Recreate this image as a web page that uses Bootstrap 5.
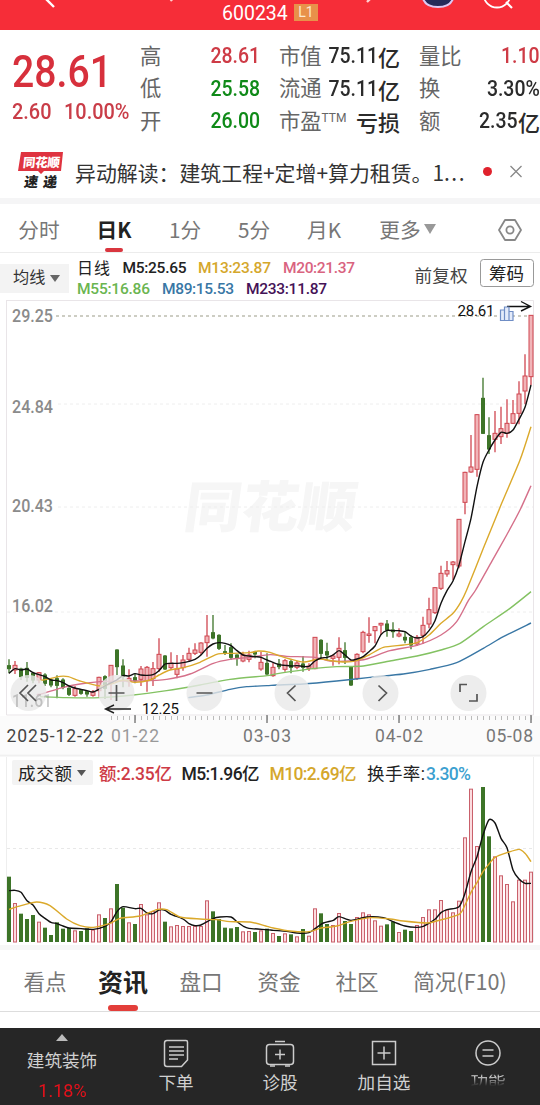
<!DOCTYPE html>
<html lang="zh-CN">
<head>
<meta charset="utf-8">
<meta name="viewport" content="width=device-width, initial-scale=1">
<title>600234</title>
<link href="https://cdn.jsdelivr.net/npm/bootstrap@5.3.0/dist/css/bootstrap.min.css" rel="stylesheet">
<style>
body{font-family:Roboto,"Noto Sans CJK SC",sans-serif;background:#fff;color:#333;width:540px;height:1105px;overflow:hidden;line-height:1}
svg{display:block;flex:none}
.cjk{font-family:"Noto Sans CJK SC",sans-serif}
.topbar{height:30px;background:#f62d38;color:#fff;position:relative}
.topbar .code{font-size:19.5px;line-height:27px;position:absolute;left:222px;top:0}
.lv{position:absolute;left:294px;top:4px;width:24px;height:17px;background:#e8914a;font-size:14px;line-height:17px;text-align:center;color:#fde8d0}
.quote{height:114px;display:grid;grid-template-columns:140px 120px 19px 121px 19px 121px;padding-top:10px}
.quote .line{height:32.6px;display:flex;justify-content:space-between;align-items:center;font-size:21.3px;white-space:nowrap;color:#666}
.quote .val{font-size:22px;font-weight:500;display:flex;align-items:center}
.quote .dig{transform:scaleX(.885);transform-origin:right}
.bigp{font-size:43.5px;font-weight:500;line-height:44px;padding:11px 0 0 12px;color:#d7303c}
.squeeze{display:inline-block;transform:scaleX(.9);transform-origin:left}
.chg{font-size:22.5px;line-height:23px;padding:5px 0 0 12px;color:#c93d48;display:flex;font-weight:500}
.chg .squeeze{width:52px;transform:scaleX(.885)}
.red{color:#ce3b46!important}.grn{color:#0f8a18!important}.dk{color:#2b2b2b!important}
.news{height:54px;padding-left:18px;font-size:20.9px;color:#333}
.sep{height:6px;background:#f5f5f6}
.tabs{height:49px;display:grid;grid-template-columns:78px 72px 70px 68px 72px 95px 85px;font-size:20.7px;color:#777;border-bottom:1px solid #ececec}
.tabs>div{display:flex;align-items:center;justify-content:center;position:relative;height:51px}
.tabs .on,.lower .on{color:#222;font-weight:700}
.bar{position:absolute;background:#d9363f;border-radius:3px}
.legendrow{height:47px;display:flex}
.pill{background:#f3f3f3;color:#333;display:flex;align-items:center;gap:5px}
.legendrow .pill{height:29px;width:69px;margin-top:11px;padding-left:13px;font-size:16.2px}
.lower{height:62px;border-bottom:1px solid #ddd;display:grid;grid-template-columns:78px 78px 78px 78px 78px 128px 16px;font-size:21.6px;color:#777;padding-left:6px}
.lower>div{display:flex;align-items:center;justify-content:center;position:relative;white-space:nowrap;height:62px}
.foot{height:77px;margin-top:16px;background:#262626;color:#d0d0d0;display:grid;grid-template-columns:124px 104px 104px 104px 104px;font-size:17.6px}
.foot>div{display:flex;flex-direction:column;align-items:center}
.foot svg{margin-top:11px}
.foot span{line-height:20px;margin-top:4px}
.foot .fade-label{margin-top:3px;-webkit-mask-image:linear-gradient(#0000 0 3px,#000 5px,#0006 11px,#0000 15px);mask-image:linear-gradient(#0000 0 3px,#000 5px,#0006 11px,#0000 15px);filter:blur(.7px)}
</style>
</head>
<body>
<header class="topbar overflow-hidden">
<svg width="540" height="30" fill="none" stroke="#fff"><path d="M45-2 54 7" stroke-width="2.4"/><path d="M169-3 172 1M367 2l4-4" stroke-width="2.4" stroke="#ffd0d0"/><path d="M422-6q1 13 16 13t16-13z" fill="#252b5a" stroke="#dcc8f4" stroke-width="2"/><circle cx="497" cy="-6" r="13.500" stroke-width="1.800"/><path d="m506 2 6 6" stroke-width="2.200"/></svg>
<span class="code">600234</span><span class="lv">L1</span>
</header>
<section class="quote">
<div><div class="bigp"><span class="squeeze">28.61</span></div><div class="chg"><span class="squeeze">2.60</span><span class="squeeze">10.00%</span></div></div>
<div>
<div class="line">高<span class="val red"><span class="dig">28.61</span></span></div><div class="line">低<span class="val grn"><span class="dig">25.58</span></span></div><div class="line">开<span class="val grn"><span class="dig">26.00</span></span></div></div><div></div>
<div><div class="line">市值<span class="val dk"><span class="dig">75.11</span><span class="cjk">亿</span></span></div><div class="line">流通<span class="val dk"><span class="dig">75.11</span><span class="cjk">亿</span></span></div><div class="line"><span>市盈<sup style="font-size:12px;top:-7px">TTM</sup></span><span class="val dk cjk">亏损</span></div></div><div></div>
<div><div class="line">量比<span class="val red"><span class="dig">1.10</span></span></div><div class="line">换<span class="val dk"><span class="dig">3.30%</span></span></div><div class="line">额<span class="val dk"><span class="dig">2.35</span><span class="cjk">亿</span></span></div></div>
</section>
<section class="news d-flex align-items-center cjk">
<svg width="46" height="40" viewBox="18 152 46 40"><path d="M21 153h42l-2 19H44l-3 3-3-3H18z" fill="#df3340"/><g font-family="Noto Sans CJK SC" font-weight="900"><text transform="translate(22.500 167.500) skewX(-6)" font-size="12.500" textLength="37" fill="#fff">同花顺</text><text transform="translate(23.500 188) skewX(-8)" font-size="14" textLength="33" fill="#222">速递</text></g></svg>
<span class="text-nowrap" style="margin-left:11px;padding-top:2px">异动解读：建筑工程+定增+算力租赁。1<span style="letter-spacing:1.5px">...</span></span>
<svg class="position-absolute" style="left:480px" width="46" height="20" viewBox="480 161 46 20"><circle cx="487.500" cy="171.500" r="4.500" fill="#e0222d"/><path d="m510.500 166 11 11m0-11-11 11" stroke="#888" stroke-width="1.300"/></svg>
</section>
<div class="sep"></div>
<nav class="tabs cjk">
<div>分时</div><div class="on">日K<i class="bar" style="width:18px;height:4px;left:27px;bottom:3px"></i></div><div>1分</div><div>5分</div><div>月K</div><div><span>更多</span><svg style="margin:0 0 2px 3px" width="12" height="10"><path d="M0 0h12L6 10z" fill="#999"/></svg></div>
<div><svg style="margin-left:25px" width="26" height="26" fill="none" stroke="#888" stroke-width="1.800"><path d="M8 3h10l6 10-6 10H8L2 13z" stroke-linejoin="round"/><circle cx="13" cy="13" r="3.600"/></svg></div>
</nav>
<section class="legendrow">
<div class="pill">均线<svg width="10" height="7"><path d="M0 0h10L5 7z" fill="#666"/></svg></div>
<svg width="471" height="47" viewBox="69 253 471 47" font-size="15.500" font-family="Roboto,Noto Sans CJK SC" font-weight="500">
<text x="77" y="274" textLength="33" font-size="16" font-weight="400" fill="#222">日线</text><text x="122.500" y="273" textLength="64" fill="#222">M5:25.65</text><text x="198" y="273" textLength="73" fill="#d5a72c">M13:23.87</text><text x="283" y="273" textLength="72" fill="#d9637f">M20:21.37</text>
<text x="77" y="294" textLength="73" fill="#6ab550">M55:16.86</text><text x="162" y="294" textLength="72" fill="#3977a5">M89:15.53</text><text x="246" y="294" textLength="81" fill="#451357">M233:11.87</text>
<g font-weight="400" fill="#444"><text x="414.500" y="282" font-size="17.600" textLength="53">前复权</text><rect x="480.500" y="259.500" width="53" height="27" rx="3" fill="none" stroke="#999"/><text x="489" y="280" font-size="17.500" textLength="35" fill="#222">筹码</text></g></svg>
</section>
<svg id="kchart" width="540" height="457" viewBox="0 300 540 457" font-family="Roboto,Noto Sans CJK SC">
<rect x="0" y="716" width="540" height="38" fill="#fbfbfb"/><path d="M0 755.500H540" stroke="#f0f0f0" stroke-width="2"/>
<text transform="translate(182 527) skewX(-8)" font-family="Noto Sans CJK SC" font-size="55" font-weight="900" fill="#f6f6f6" textLength="172" lengthAdjust="spacingAndGlyphs">同花顺</text>
<path d="M7 300.500H533.500V715H6.500V300" fill="none" stroke="#e9e5e8"/>
<path d="M56 316H531" stroke="#bdbdb0" stroke-width="1.300" stroke-dasharray="3 3"/>
<path d="M58 404H533M58 507H533M7 612H533" stroke="#eee" stroke-dasharray="3 3"/>
<g id="candles"></g>
<g id="averages" fill="none" stroke-width="1.400" stroke-linejoin="round"></g>
<g id="roundbtns" fill="#e8e8e8" fill-opacity=".8"><circle cx="28.500" cy="693" r="18"/><circle cx="116.500" cy="693" r="18"/><circle cx="204.500" cy="693" r="18"/><circle cx="292.500" cy="693" r="18"/><circle cx="380.500" cy="693" r="18"/><circle cx="468.500" cy="693" r="18"/></g>
<g font-size="17.500" fill="#8b8b8b" font-weight="500"><text x="12" y="322" textLength="41" lengthAdjust="spacingAndGlyphs">29.25</text><text x="12" y="413" textLength="41" lengthAdjust="spacingAndGlyphs">24.84</text><text x="12" y="512" textLength="41" lengthAdjust="spacingAndGlyphs">20.43</text><text x="12" y="611.500" textLength="41" lengthAdjust="spacingAndGlyphs">16.02</text><text x="12" y="707" textLength="40" opacity=".45" lengthAdjust="spacingAndGlyphs">11.61</text></g>
<path d="m28 685-8 8 8 8m8-16-8 8 8 8M108.500 693h16m-8-8v16M196.500 693h16M295.500 685.500l-8 7.500 8 8M378.500 685.500l8 7.500-8 8M460 692v-7.500h7M477 694v7h-8" fill="none" stroke="#555" stroke-width="1.700"/>
<path d="m114 705-8.500 4 8.500 4M106 709h25" fill="none" stroke="#222" stroke-width="1.400"/>
<text x="142" y="714" font-size="15" textLength="37" fill="#111">12.25</text>
<path d="M507 306.500h23m-9-5 9.500 5-9.500 4.500" fill="none" stroke="#111" stroke-width="1.400"/>
<path d="M500.500 310h4v10.500h-4zM504.500 307h4.500v13.500h-4.500zM509 311.500h4v9h-4z" stroke="#6f8dc5" fill="#e4ebfa" stroke-width="1.200"/>
<text x="457.500" y="316" font-size="15" textLength="37" fill="#111">28.61</text>
<path id="ticks" stroke="#bbb"/>
<path d="M135 715v8M267 715v8M399 715v8M531 715v8" stroke="#888" stroke-width="1.600"/>
<g font-size="17.500" fill="#777"><text x="6.500" y="742" textLength="97" fill="#444">2025-12-22</text><text x="111" y="742" textLength="48" fill="#999">01-22</text><text x="243" y="742" textLength="48">03-03</text><text x="375" y="742" textLength="48">04-02</text><text x="486" y="742" textLength="47">05-08</text></g>
</svg>
<svg id="vchart" width="540" height="193" viewBox="0 757 540 193" font-family="Roboto,Noto Sans CJK SC" font-size="17.500">
<path d="M6.500 757V942M533.500 757V942" stroke="#eee"/><path d="M7 848.500H533" stroke="#e8e8e8" stroke-dasharray="3 3"/>
<rect x="12" y="760" width="81" height="25" rx="2" fill="#f3f3f3"/><text x="18" y="780" textLength="54" fill="#222">成交额</text><path d="M77 770h9l-4.500 6z" fill="#555"/>
<g font-weight="500"><text x="99" y="779.500" textLength="73" fill="#ce3b46">额:2.35亿</text><text x="181.500" y="779.500" textLength="78" fill="#222">M5:1.96亿</text><text x="269.500" y="779.500" textLength="87" fill="#d5a72c">M10:2.69亿</text></g><text x="367" y="779.500" textLength="58" fill="#222">换手率:</text><text x="426" y="779.500" textLength="45" fill="#3c9fd0" font-weight="500">3.30%</text>
<g id="volumes"></g><g id="vavg" fill="none" stroke-width="1.400" stroke-linejoin="round"></g>
<rect y="945" width="540" height="5" fill="#f7f7f7"/>
</svg>
<nav class="lower cjk">
<div>看点</div><div class="on" style="font-size:25px">资讯<i class="bar" style="width:30px;height:6px;left:24px;bottom:1px;background:#e33e3a"></i></div><div>盘口</div><div>资金</div><div>社区</div><div>简况(F10)</div>
</nav>
<footer class="foot cjk">
<div><svg style="margin-top:6px" width="12" height="7"><path d="M6 0 12 7H0z" fill="#bbb"/></svg><span style="margin-top:9px">建筑装饰</span><span style="color:#e4111b;font-family:Roboto;font-size:19px;margin-top:11px;transform:scaleX(.95)">1.18%</span></div>
<div><svg width="26" height="29" fill="none" stroke="#ccc" stroke-width="1.500"><path d="M4 1.500h19q1.500 0 1.500 1.500v18l-6 6.500H4Q1.500 27.500 1.500 25V4Q1.500 1.500 4 1.500M6 8h15M6 12h15M6 16h15M6 20h9"/></svg><span>下单</span></div>
<div><svg width="30" height="29" fill="none" stroke="#ccc" stroke-width="1.500"><rect x="1.500" y="5.500" width="27" height="20" rx="3"/><path d="M10 2.500h10M5 27h5M20 27h5M10 15.500h10m-5-5v10"/></svg><span>诊股</span></div>
<div><svg width="26" height="29" fill="none" stroke="#ccc" stroke-width="1.500"><path d="M1.500 2.500h23v23h-23zM6.500 14h13M13 7.500v13"/></svg><span>加自选</span></div>
<div><svg width="26" height="29" fill="none" stroke="#ccc" stroke-width="1.500"><circle cx="13" cy="14" r="12"/><path d="M7.500 11h11M7.500 17h11"/></svg><span class="fade-label">功能</span></div>
</footer>
<script>
const RED='#cf4650',GREEN='#3d7428';
/* candle rows: colour, high, body top, body bottom, low in thirds of a pixel below the group's base */
const groups=[
{base:600,first:0,rows:'g178,197,206,220 r183,196,210,222 g203,207,230,240 g186,205,232,245 g215,220,240,250 r216,218,240,250 g220,225,250,258 g235,240,255,262 g226,236,256,295 g235,240,262,268 g262,265,283,288 r258,266,286,290 g268,270,280,284 g272,275,282,290 r270,276,286,290 r230,232,272,290 g226,230,265,297 r195,196,250,300 g148,150,200,225 g178,198,228,262 r208,235,245,260 g220,233,242,250 r198,207,238,258 r198,202,242,275 r186,206,236,258 r115,163,206,215 g165,168,207,210 r157,190,203,210 r165,207,223,235 r165,180,203,212 r143,160,178,185 r130,150,160,165 r127,129,157,165 r45,108,128,170 g45,98,114,118 g103,106,145,150 g135,155,160,165 g130,143,172,180 g163,165,173,197 r155,165,183,187 r152,165,178,187 g152,156,162,175 r156,187,207,212 g160,190,222,225'},
{base:560,first:44,rows:'r308,322,347,350 g297,312,320,328 r297,302,328,335 g300,305,322,340 r303,309,322,328 g288,312,322,335 r310,318,325,333 r232,232,326,328 g238,241,280,295 g248,275,285,300 r283,288,295,317 r232,265,292,313 g247,272,292,312 g320,322,375,378 r280,283,355,360 r212,217,275,280 r172,222,226,248 r198,200,212,250 r188,190,195,225 g180,192,210,230 g187,210,215,233 r205,222,228,232 g215,232,240,250 g226,233,255,268 r225,232,252,258 r170,196,226,252 r113,149,192,205 r82,83,158,162 r17,40,85,90 r3,32,42,50'},
{base:300,first:74,rows:'r783,786,794,840 r657,658,798,805 r515,517,607,643 r405,501,516,518 r343,344,508,530 g233,295,400,402 g352,407,447,462 r333,400,418,457 r320,386,410,432 r298,370,400,413 r300,341,370,372 r244,282,340,373 r163,228,273,313 r45,46,230,255'}];
let out='';
for(const g of groups)g.rows.split(' ').forEach((s,k)=>{
 const x=9+6*(g.first+k),up=s[0]=='r',[h,a,b,l]=s.slice(1).split(',').map(v=>g.base+v/3),c=up?RED:GREEN;
 out+=`<path d="M${x} ${h}V${l}" stroke="${c}" stroke-width="1.3"/><rect x="${x-(up?2:1.5)}" y="${a}" width="${up?4:3}" height="${Math.max(b-a,1.5)}" fill="${up?'#f1b4b8':GREEN}" stroke="${c}" stroke-width="1"/>`;
});
candles.innerHTML=out;
/* each segment: x origin, y base, then x,y pairs in thirds of a pixel */
function curve(color,...segs){
 const p=[];
 for(const [ox,oy,s] of segs)s.split(' ').forEach(q=>{const[a,b]=q.split(',');p.push([ox+a/3,oy+b/3])});
 let d='M'+p[0];
 for(let i=0;i<p.length-1;i++){const a=p[i-1]||p[i],b=p[i],c=p[i+1],e=p[i+2]||c;
  d+=`C${b[0]+(c[0]-a[0])/8} ${b[1]+(c[1]-a[1])/8} ${c[0]-(e[0]-b[0])/8} ${c[1]-(e[1]-b[1])/8} ${c}`}
 return `<path d="${d}" stroke="${color}"/>`;
}
averages.innerHTML=
curve('#3977a5',[0,600,'565,293 620,285 690,268 740,260 801,257'],[270,560,'20,375 100,372 200,363 300,352 400,342 480,328 560,308 640,265 700,230 783,189'])+
curve('#83c262',[0,600,'120,290 200,293 300,293 400,285 500,272 600,255 690,238 801,227'],[270,560,'10,343 60,335 135,325 200,320 280,318 360,303 441,288 513,270 570,250 640,200 720,145 783,95'])+
curve('#d5708a',[0,600,'110,284 130,280 190,262 240,252 300,245 360,243 420,243 500,238 570,222 640,190 690,178 750,172'],[270,560,'0,284 50,289 135,292 180,303 240,303 290,297 360,272 441,256 513,225 560,185 595,122'],[360,300,'347,870 395,785 440,705 480,630 513,557'])+
curve('#dba92b',[0,600,'117,242 140,238 180,229 205,230 240,243 300,258 340,250 370,240 405,247 450,240 477,225 510,210 550,203 600,187 650,163 690,160 750,158 775,153'],[270,560,'0,277 27,287 60,297 100,306 150,297 189,303 225,306 260,302 297,285 340,262 400,255 441,248 477,225 513,190 549,160 572,127'],[360,300,'320,870 370,745 425,610 480,480 513,380'])+
curve('#111',[0,600,'27,220 45,206 63,210 81,207 99,218 117,224 135,230 153,240 171,242 189,248 207,258 225,264 243,268 261,272 279,276 297,268 320,255 350,240 369,227 387,228 405,221 423,225 441,226 459,224 477,212 495,192 513,190 531,190 549,188 567,184 585,178 603,165 621,145 639,132 657,128 675,130 693,137 711,152 729,165 747,168 765,170 783,172 801,180'],[270,560,'9,307 27,314 45,316 63,318 81,317 99,319 117,319 135,303 153,294 171,292 189,285 207,272 225,285 243,300 261,297 279,290 297,275 315,258 333,224 351,211 369,212 387,212 405,215 423,228 441,234 459,230 477,212 495,182 513,130 531,92'],[360,300,'279,843 297,795 315,725 333,655 351,560 369,487 387,450 405,420 423,397 441,400 459,390 477,358 495,322 513,255']);
const vol='g365 r444 g476 g492 g480 r500 g518 g540 g502 g521 g519 r526 g528 g520 r524 r478 g489 r460 g387 g458 r502 g507 r447 r478 r468 r442 g500 r514 r510 r513 r513 r513 r513 r436 g469 g492 g518 g520 g516 r529 r528 g531 r526 g521 r534 g543 r535 g538 r544 g522 r542 r460 g475 g507 r510 r474 g498 g507 r486 r472 r478 r496 r512 g508 g500 r531 g524 g528 r510 r486 r463 r463 r435 r464 r472 r437 r247 r101 r273 g96 g244 r304 r361 r387 r439 r374 r374 r350';
volumes.innerHTML=vol.split(' ').map((s,i)=>{const y=755+s.slice(1)/3,up=s[0]=='r';
 return up?`<rect x="${7.5+6*i}" y="${y+.5}" width="3" height="${941.5-y}" fill="#fbdcdf" stroke="#c9606b" stroke-width="1"/>`:`<rect x="${7+6*i}" y="${y}" width="4" height="${942-y}" fill="${GREEN}"/>`}).join('');
vavg.innerHTML=curve('#111',[0,755,'27,407 45,406 63,412 81,437 99,450 117,476 135,490 153,502 171,506 189,513 207,519 243,521 280,523 315,514 333,500 351,470 369,455 405,461 423,460 441,474 459,476 477,465 495,466 513,478 549,492 567,506 585,512 603,510 639,491 660,486 693,486 711,500 729,513 747,520 801,524'],[270,755,'10,526 50,529 81,534 117,533 135,521 160,504 190,496 207,485 243,496 290,486 340,488 369,500 405,513 440,517 460,514 477,505 495,493 513,473 531,464 567,455 585,415 603,350 621,305 639,240 657,194 675,204 693,250 711,278 729,345 747,372 765,385 783,385'])+
curve('#dba92b',[0,755,'27,463 63,452 110,441 150,452 200,492 240,512 280,517 330,505 360,490 420,483 470,464 500,464 540,486 600,492 650,494 690,500 750,501 801,514'],[270,755,'10,519 60,528 117,530 150,520 200,513 240,500 300,488 360,492 400,498 470,504 500,498 567,478 585,450 603,412 621,383 639,350 657,327 675,307 711,293 747,283 765,295 783,320']);
let t='';for(let x=111;x<532;x+=6)t+=`M${x+.5} 716v4`;ticks.setAttribute('d',t);
</script>
<script src="https://cdn.jsdelivr.net/npm/bootstrap@5.3.0/dist/js/bootstrap.bundle.min.js"></script>
</body>
</html>
